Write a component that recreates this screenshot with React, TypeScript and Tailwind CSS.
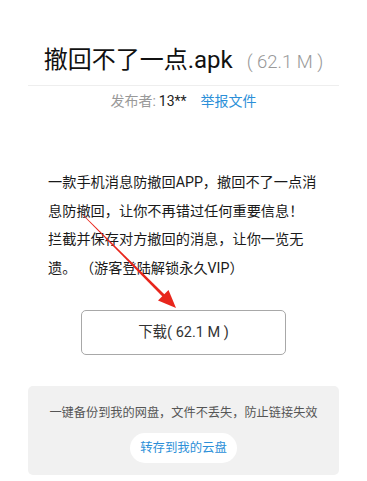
import React from "react";

const font = { fontFamily: 'Roboto, "Noto Sans CJK SC", sans-serif' };

export default function App() {
  return (
    <div className="relative w-[367px] h-[481px] bg-white overflow-hidden" style={font}>
      <div className="px-7 pt-[44px]">
        {/* title */}
        <div className="flex items-baseline justify-center h-[32px] leading-[32px]">
          <span className="text-[24px] text-[#111]">撤回不了一点.apk</span>
          <span className="ml-[14px] text-[18.5px] font-light text-[#999]">( 62.1 M )</span>
        </div>
        <div className="mt-[9px] h-px bg-[#eeeeee]" />

        {/* publisher */}
        <div className="mt-[5px] flex justify-center text-[14px] leading-[20px]">
          <span className="text-[#999]">发布者:</span>
          <span className="ml-[3px] text-[#222]">13**</span>
          <a className="ml-[14px] text-[#2b8fd8]">举报文件</a>
        </div>

        {/* description */}
        <p className="mt-[57px] ml-[20px] w-[275px] text-[14.2px] leading-[28.5px] text-[#1a1a1a]">
          一款手机消息防撤回APP，撤回不了一点消息防撤回，让你不再错过任何重要信息！
          <br />
          拦截并保存对方撤回的消息，让你一览无遗。 （游客登陆解锁永久VIP）
        </p>

        {/* download button */}
        <button className="mx-auto mt-[28px] flex w-[205px] h-[45px] items-center justify-center rounded-[5px] border border-[#a8a8a8] bg-white text-[14.5px] text-[#333]">
          下载( 62.1 M )
        </button>

        {/* save to cloud */}
        <div className="mt-[31px] rounded-[5px] bg-[#f1f1f1] pt-[18px] pb-[12px] flex flex-col items-center">
          <div className="text-[12.2px] leading-[18px] text-[#555]">一键备份到我的网盘，文件不丢失，防止链接失效</div>
          <div className="mt-[11px] flex h-[30px] w-[107px] items-center justify-center rounded-full bg-white text-[12.4px] text-[#2b8fd8]">
            转存到我的云盘
          </div>
        </div>
      </div>

      {/* red annotation arrow */}
      <svg className="absolute left-0 top-0 w-[367px] h-[481px] pointer-events-none" viewBox="0 0 367 481">
        <polygon points="83.2,214.8 82.8,215.2 162.9,297.1 165.1,294.9" fill="#e8261c" />
        <polygon points="176,308 168.5,290 158,300.5" fill="#e8261c" />
      </svg>
    </div>
  );
}
